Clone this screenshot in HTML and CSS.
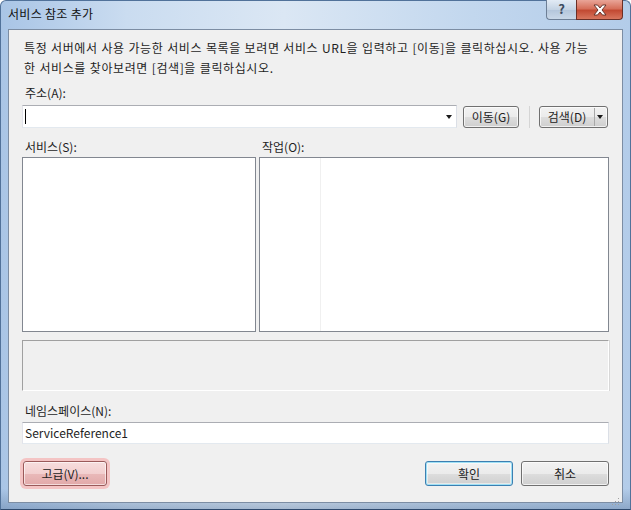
FILE: index.html
```html
<!DOCTYPE HTML>
<html>
<head>
<meta charset="UTF-8">
<title>서비스 참조 추가</title>
<link rel="stylesheet" href="styles.css">
</head>
<body>

<div class="window">
	<div class="titlebar">
		<span class="title">서비스 참조 추가</span>
		<div class="caption-buttons">
			<div class="cap-help">?</div>
			<div class="cap-close">
				<svg width="16" height="12" viewBox="0 0 16 12">
					<path d="M2 1 L5.5 1 L8 4 L10.5 1 L14 1 L10 6 L14 11 L10.5 11 L8 8 L5.5 11 L2 11 L6 6 Z" fill="#fff" stroke="#5a2a22" stroke-width="0.9" stroke-linejoin="round"/>
				</svg>
			</div>
		</div>
	</div>

	<div class="client">
		<p class="desc">특정 서버에서 사용 가능한 서비스 목록을 보려면 서비스 URL을 입력하고 [이동]을 클릭하십시오. 사용 가능<br>한 서비스를 찾아보려면 [검색]을 클릭하십시오.</p>

		<div class="label">주소(A):</div>
		<div class="address-row">
			<div class="combo">
				<span class="caret"></span>
				<span class="combo-arrow"></span>
			</div>
			<div class="btn btn-go">이동(G)</div>
			<div class="separator"></div>
			<div class="btn split">
				<span class="split-main">검색(D)</span>
				<span class="split-arrow"><span class="combo-arrow"></span></span>
			</div>
		</div>

		<div class="lists">
			<div class="label list-label">서비스(S):</div>
			<div class="label list-label">작업(O):</div>
			<div class="listbox"></div>
			<div class="listbox ops">
				<div class="ops-col"></div>
			</div>
		</div>

		<div class="status"></div>

		<div class="label ns-label">네임스페이스(N):</div>
		<div class="textbox">ServiceReference1</div>

		<div class="footer">
			<div class="btn btn-dialog btn-advanced">고급(V)...</div>
			<div class="footer-right">
				<div class="btn btn-dialog btn-default">확인</div>
				<div class="btn btn-dialog">취소</div>
			</div>
		</div>
		<div class="grip">
			<svg width="8" height="8" viewBox="0 0 8 8">
				<rect x="6" y="0" width="1" height="1" fill="#a0a0a0"/>
				<rect x="3" y="3" width="1" height="1" fill="#a0a0a0"/>
				<rect x="6" y="3" width="1" height="1" fill="#a0a0a0"/>
				<rect x="0" y="6" width="1" height="1" fill="#a0a0a0"/>
				<rect x="3" y="6" width="1" height="1" fill="#a0a0a0"/>
				<rect x="6" y="6" width="1" height="1" fill="#a0a0a0"/>
			</svg>
		</div>
	</div>
</div>

</body>
</html>
```

FILE: styles.css
```css
/* *** Page *** */
body {
	margin: 0;
	font-family: "Noto Sans CJK KR", "Noto Sans", sans-serif;
	font-size: 12px;
	color: #1e1e1e;
}

/* *** Window frame *** */
.window {
	width: 631px;
	height: 510px;
	box-sizing: border-box;
	padding: 0 7px 7px 7px;
	border: 1px solid #51729a;
	border-bottom-color: #2f4a6e;
	border-radius: 6px 6px 0 0;
	background:
		linear-gradient(to bottom, rgba(255, 255, 255, 0) 96%, rgba(70, 100, 140, 0.35) 100%),
		linear-gradient(to right, #a9c5e6 0%, #cadcf0 20%, #dbe7f4 45%, #c2d7ee 75%, #b3cce9 100%);
	position: relative;
}

.titlebar {
	height: 28px;
	display: flex;
	align-items: center;
	position: relative;
}

.title {
	color: #111;
	font-size: 12px;
	line-height: 16px;
	margin-top: -2px;
	letter-spacing: 0.3px;
}

.caption-buttons {
	position: absolute;
	top: -1px;
	right: 0;
	display: flex;
	height: 20px;
}

.cap-help {
	width: 29px;
	height: 19px;
	border: 1px solid #6d7f96;
	border-top: none;
	border-right: none;
	border-radius: 0 0 0 4px;
	background: linear-gradient(#e2ebf5, #c4d3e4 50%, #b3c5da 51%, #c9d8e8);
	color: #3c4b5e;
	font-size: 13px;
	font-weight: bold;
	text-align: center;
	line-height: 18px;
}

.cap-close {
	width: 45px;
	height: 19px;
	border: 1px solid #6b2f26;
	border-top: none;
	border-radius: 0 0 4px 0;
	background: linear-gradient(#e9a598, #d6705b 45%, #c24a33 55%, #d8765e);
	display: flex;
	align-items: center;
	justify-content: center;
}

/* *** Client area *** */
.client {
	height: 474px;
	box-sizing: border-box;
	border: 1px solid #7c8da3;
	background: #f0f0f0;
	padding: 8px 13px 0 13px;
	position: relative;
}

.desc {
	margin: 0 0 0 2px;
	line-height: 20px;
	letter-spacing: 0.6px;
	word-spacing: 0.5px;
}

.label {
	line-height: 16px;
	padding-left: 3px;
}

.client > .label:first-of-type {
	margin-top: 7px;
}

/* *** Address row *** */
.address-row {
	display: flex;
	align-items: center;
	margin-top: 4px;
	height: 23px;
}

.combo {
	width: 435px;
	height: 23px;
	box-sizing: border-box;
	border: 1px solid #abadb3;
	border-color: #abadb3 #dbdfe6 #e3e9ef #e2e3ea;
	background: #fff;
	position: relative;
}

.caret {
	position: absolute;
	left: 2px;
	top: 3px;
	width: 1px;
	height: 15px;
	background: #000;
}

.combo-arrow {
	position: absolute;
	right: 4px;
	top: 9px;
	width: 0;
	height: 0;
	border-left: 3.5px solid transparent;
	border-right: 3.5px solid transparent;
	border-top: 4px solid #1a1a1a;
}

.btn {
	box-sizing: border-box;
	border: 1px solid #707070;
	border-radius: 3px;
	background: linear-gradient(#f2f2f2 0%, #ebebeb 50%, #dddddd 51%, #cfcfcf 100%);
	box-shadow: inset 0 0 0 1px rgba(255, 255, 255, 0.7);
	display: flex;
	align-items: center;
	justify-content: center;
	color: #222;
}

.btn-go {
	width: 56px;
	height: 22px;
	margin-left: 6px;
}

.separator {
	width: 1px;
	height: 22px;
	background: #d5d5d5;
	margin: 0 9px 0 10px;
}

.split {
	width: 69px;
	height: 22px;
	justify-content: flex-start;
}

.split-main {
	width: 54px;
	text-align: center;
	border-right: 1px solid #a8a8a8;
	line-height: 18px;
}

.split-arrow {
	flex: 1;
	position: relative;
	height: 20px;
}

.split-arrow .combo-arrow {
	right: 4px;
	top: 8px;
}

/* *** Lists *** */
.lists {
	display: grid;
	grid-template-columns: 234px 1fr;
	grid-template-rows: 16px 175px;
	column-gap: 3px;
	row-gap: 2px;
	margin-top: 11px;
}

.list-label {
	padding-left: 3px;
}

.listbox {
	box-sizing: border-box;
	border: 1px solid #828790;
	background: #fff;
}

.ops {
	display: flex;
}

.ops-col {
	width: 60px;
	border-right: 1px solid #f0f0f0;
}

.status {
	margin-top: 8px;
	height: 51px;
	box-sizing: border-box;
	border: 1px solid #a0a0a0;
	border-color: #a0a0a0 #ffffff #ffffff #a0a0a0;
	box-shadow: 1px 0 0 #d8d8d8;
	background: #f0f0f0;
}

.ns-label {
	margin-top: 12px;
}

.textbox {
	margin-top: 3px;
	height: 22px;
	box-sizing: border-box;
	border: 1px solid #abadb3;
	border-color: #abadb3 #dbdfe6 #e3e9ef #e2e3ea;
	background: #fff;
	padding-left: 2px;
	line-height: 20px;
}

/* *** Dialog buttons *** */
.footer {
	margin-top: 17px;
	display: flex;
	justify-content: space-between;
	align-items: center;
}

.footer-right {
	display: flex;
	gap: 8px;
}

.btn-dialog {
	width: 88px;
	height: 25px;
}

.btn-advanced {
	width: 84px;
	margin-left: 1px;
	border-color: #9a5a5a;
	background: linear-gradient(#f7dede 0%, #f2cfcf 50%, #e9b9b9 51%, #e2a9a9 100%);
	box-shadow: 0 0 0 3px #f4c4c4, inset 0 0 0 1px rgba(255, 255, 255, 0.6);
}

.btn-default {
	border-color: #3c7fb1;
	box-shadow: inset 0 0 0 1px #9fe0f5, inset 0 0 0 2px rgba(255, 255, 255, 0.5);
}

.grip {
	position: absolute;
	right: 2px;
	bottom: 2px;
	width: 8px;
	height: 8px;
}
```
